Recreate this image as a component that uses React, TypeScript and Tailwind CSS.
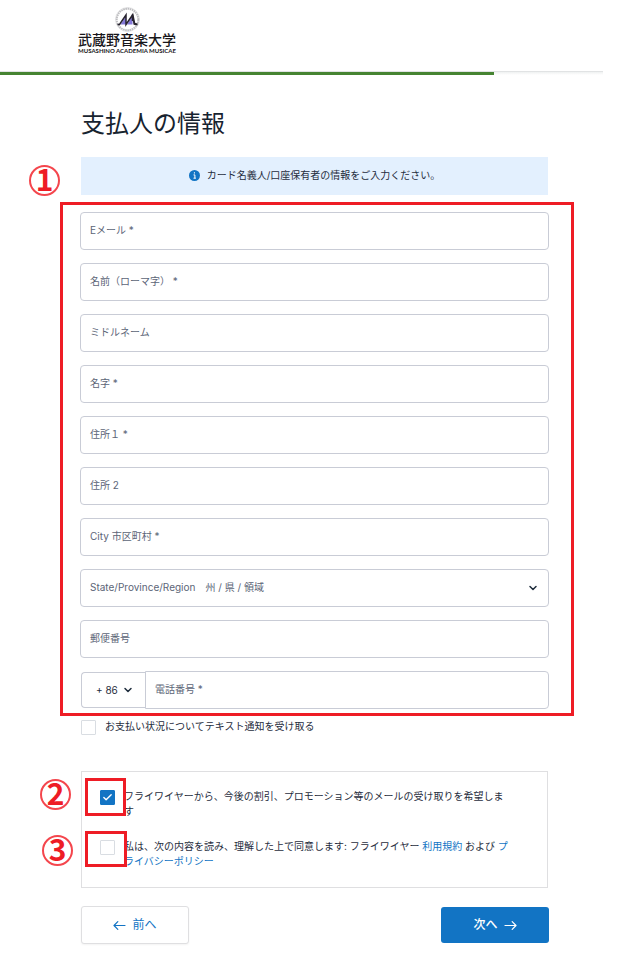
import React, { useState } from "react";
import { Check, ChevronDown } from "lucide-react";

const fieldBox =
  "flex h-[38px] items-center rounded border border-[#c9ccd6] bg-white px-[9px] pb-px text-[10px] leading-[15px] text-[#5c6577]";

function Emblem() {
  return (
    <svg width="25" height="25" viewBox="0 0 25 25" aria-hidden="true">
      <circle cx="12.5" cy="12.5" r="10.8" fill="none" stroke="#bdbdc0" strokeWidth="2" strokeDasharray="1.6 0.6" />
      <circle cx="12.5" cy="12.5" r="12" fill="none" stroke="#d2d2d4" strokeWidth="0.6" />
      <path d="M5.5 17.5 L11 9 V17.5 Z M12 17.5 L17.5 9 V17.5 Z" fill="#8478d8" />
      <path d="M2.5 17.5 H4.5 L11 8 V17.5 L17.5 8 V14" fill="none" stroke="#27232f" strokeWidth="1.5" />
      <path d="M17.5 7.5 L19.4 16.8 L22.5 17.5" fill="none" stroke="#27232f" strokeWidth="2" />
    </svg>
  );
}

function Arrow({ back = false }: { back?: boolean }) {
  return (
    <svg
      width="13"
      height="10"
      viewBox="0 0 13 10"
      fill="none"
      stroke="currentColor"
      strokeWidth="1.2"
      strokeLinecap="round"
      strokeLinejoin="round"
      aria-hidden="true"
    >
      <path d={back ? "M12 5.5H1M4.8 1.7 1 5.5l3.8 3.8" : "M1 5.5h11M8.2 1.7 12 5.5 8.2 9.3"} />
    </svg>
  );
}

function Marker({ n, className }: { n: number; className: string }) {
  return (
    <span
      className={`absolute flex size-[31px] items-center justify-center rounded-full border-2 border-[#f4464d] pb-[5px] text-[30px] leading-none font-bold text-[#ee1c25] font-['Noto_Sans_CJK_JP',sans-serif] ${className}`}
    >
      {n}
    </span>
  );
}

function TextField({ label }: { label: string }) {
  return (
    <label className={fieldBox}>
      <span className="whitespace-pre">{label}</span>
      <input type="text" className="h-full min-w-0 flex-1 bg-transparent pl-2 outline-none" />
    </label>
  );
}

function Tick({ id, checked, onChange }: { id: string; checked: boolean; onChange: (v: boolean) => void }) {
  return (
    <span className="relative block size-[15px] shrink-0">
      <input
        id={id}
        type="checkbox"
        checked={checked}
        onChange={(e) => onChange(e.target.checked)}
        className="block size-[15px] appearance-none rounded-[1px] border border-[#d9dde2] bg-white checked:border-[#1274c4] checked:bg-[#1274c4]"
      />
      {checked && <Check className="pointer-events-none absolute top-0.5 left-0.5 size-[11px] text-white" strokeWidth={3} />}
    </span>
  );
}

export default function App() {
  const [texts, setTexts] = useState(false);
  const [promo, setPromo] = useState(true);
  const [terms, setTerms] = useState(false);

  return (
    <div className="bg-white pb-8 text-[10px] leading-[15px] text-[#1f2d3d] font-['Inter','Noto_Sans_CJK_JP',sans-serif]">
      <header className="mr-8">
        <div className="flex h-[71px] flex-col items-start pt-[7px] pl-[78px]">
          <div className="flex flex-col items-center text-[#18161a]">
            <Emblem />
            <span className="text-[14px] leading-[15px] font-medium">武蔵野音楽大学</span>
            <span className="text-[6px] leading-[8px] font-bold whitespace-nowrap font-['Lato',sans-serif]">
              MUSASHINO ACADEMIA MUSICAE
            </span>
          </div>
        </div>
        <div className="h-1 border-t border-[#e1e3e4] bg-linear-to-b from-[#eff1f1] to-white">
          <div className="h-[3px] w-[82%] bg-[#468432]" />
        </div>
      </header>

      <main className="pr-[86px] pl-20">
        <h1 className="pt-[31px] pl-px text-[24px] leading-9 font-normal text-[#17232f]">支払人の情報</h1>

        <div className="relative mx-px mt-[15px] flex h-[38px] items-center justify-center gap-[7px] bg-[#e3f0fe] pb-px">
          <Marker n={1} className="top-2 -left-[52px]" />
          <svg width="11" height="11" viewBox="0 0 11 11" aria-hidden="true">
            <circle cx="5.5" cy="5.5" r="5.5" fill="#1274c4" />
            <path d="M4.5 4.9h1.4v3.2M4.5 8.2h2.4M5.4 2.2v1.3" fill="none" stroke="#fff" strokeWidth="1" />
          </svg>
          <p>カード名義人/口座保有者の情報をご入力ください。</p>
        </div>

        <form className="mt-[17px]" onSubmit={(e) => e.preventDefault()}>
          <div className="relative flex flex-col gap-[13px]">
            <div className="pointer-events-none absolute -top-2.5 -right-[25px] -bottom-[7px] -left-5 border-3 border-[#ee1c25]" />
            <TextField label="Eメール *" />
            <TextField label="名前（ローマ字） *" />
            <TextField label="ミドルネーム" />
            <TextField label="名字 *" />
            <TextField label="住所１ *" />
            <TextField label="住所 2" />
            <TextField label="City 市区町村 *" />
            <div className="relative">
              <select aria-label="State/Province/Region　州 / 県 / 領域" className={`${fieldBox} w-full appearance-none outline-none`}>
                <option>State/Province/Region　州 / 県 / 領域</option>
              </select>
              <ChevronDown className="pointer-events-none absolute top-[13px] right-2.5 size-3 text-[#1f2d3d]" strokeWidth={3} />
            </div>
            <TextField label="郵便番号" />
            <div className="flex items-center pl-px">
              <div className="relative w-16">
                <select
                  aria-label="国番号"
                  className="block h-9 w-full appearance-none rounded-l border border-r-0 border-[#c9ccd6] bg-white pl-3.5 text-[10px] leading-[15px] text-[#1f2d3d] outline-none"
                >
                  <option>+ 86</option>
                </select>
                <ChevronDown className="pointer-events-none absolute top-3 right-[11px] size-3 text-[#1f2d3d]" strokeWidth={3} />
              </div>
              <label className={`${fieldBox} flex-1 rounded-l-none`}>
                <span>電話番号 *</span>
                <input type="tel" className="h-full min-w-0 flex-1 bg-transparent pl-2 outline-none" />
              </label>
            </div>
          </div>

          <div className="mt-[11px] flex gap-[9px] pl-px">
            <Tick id="texts" checked={texts} onChange={setTexts} />
            <label htmlFor="texts" className="-mt-px">
              お支払い状況についてテキスト通知を受け取る
            </label>
          </div>

          <div className="mx-px mt-9 flex flex-col gap-[21px] border border-[#dfdfe1] py-[18px] pr-[35px] pl-[18px]">
            <div className="relative flex gap-[9px]">
              <Marker n={2} className="-top-[11px] -left-[60px]" />
              <Tick id="promo" checked={promo} onChange={setPromo} />
              <div className="pointer-events-none absolute -top-3 -left-[15px] h-[38px] w-[41px] border-3 border-[#ee1c25]" />
              <label htmlFor="promo" className="-mt-px">
                フライワイヤーから、今後の割引、プロモーション等のメールの受け取りを希望します
              </label>
            </div>
            <div className="relative flex gap-[9px]">
              <Marker n={3} className="-top-[5px] -left-[58px]" />
              <Tick id="terms" checked={terms} onChange={setTerms} />
              <div className="pointer-events-none absolute -top-[9px] -left-[15px] h-9 w-[42px] border-3 border-[#ee1c25]" />
              <label htmlFor="terms" className="-mt-px">
                私は、次の内容を読み、理解した上で同意します: フライワイヤー{" "}
                <a href="#terms-of-use" className="text-[#1274c4]">利用規約</a> および{" "}
                <a href="#privacy" className="text-[#1274c4]">プライバシーポリシー</a>
              </label>
            </div>
          </div>

          <div className="mt-[18px] flex items-center justify-between pl-px text-[12px] leading-[18px]">
            <button
              type="button"
              className="flex h-[38px] w-[108px] items-center justify-center gap-1.5 rounded-[3px] border border-[#dfdfe1] bg-white text-[#1274c4] shadow-xs"
            >
              <Arrow back />
              前へ
            </button>
            <button
              type="submit"
              className="flex h-9 w-[108px] items-center justify-center gap-1.5 rounded-[3px] bg-[#1274c4] font-medium text-white"
            >
              次へ
              <Arrow />
            </button>
          </div>
        </form>
      </main>
    </div>
  );
}
